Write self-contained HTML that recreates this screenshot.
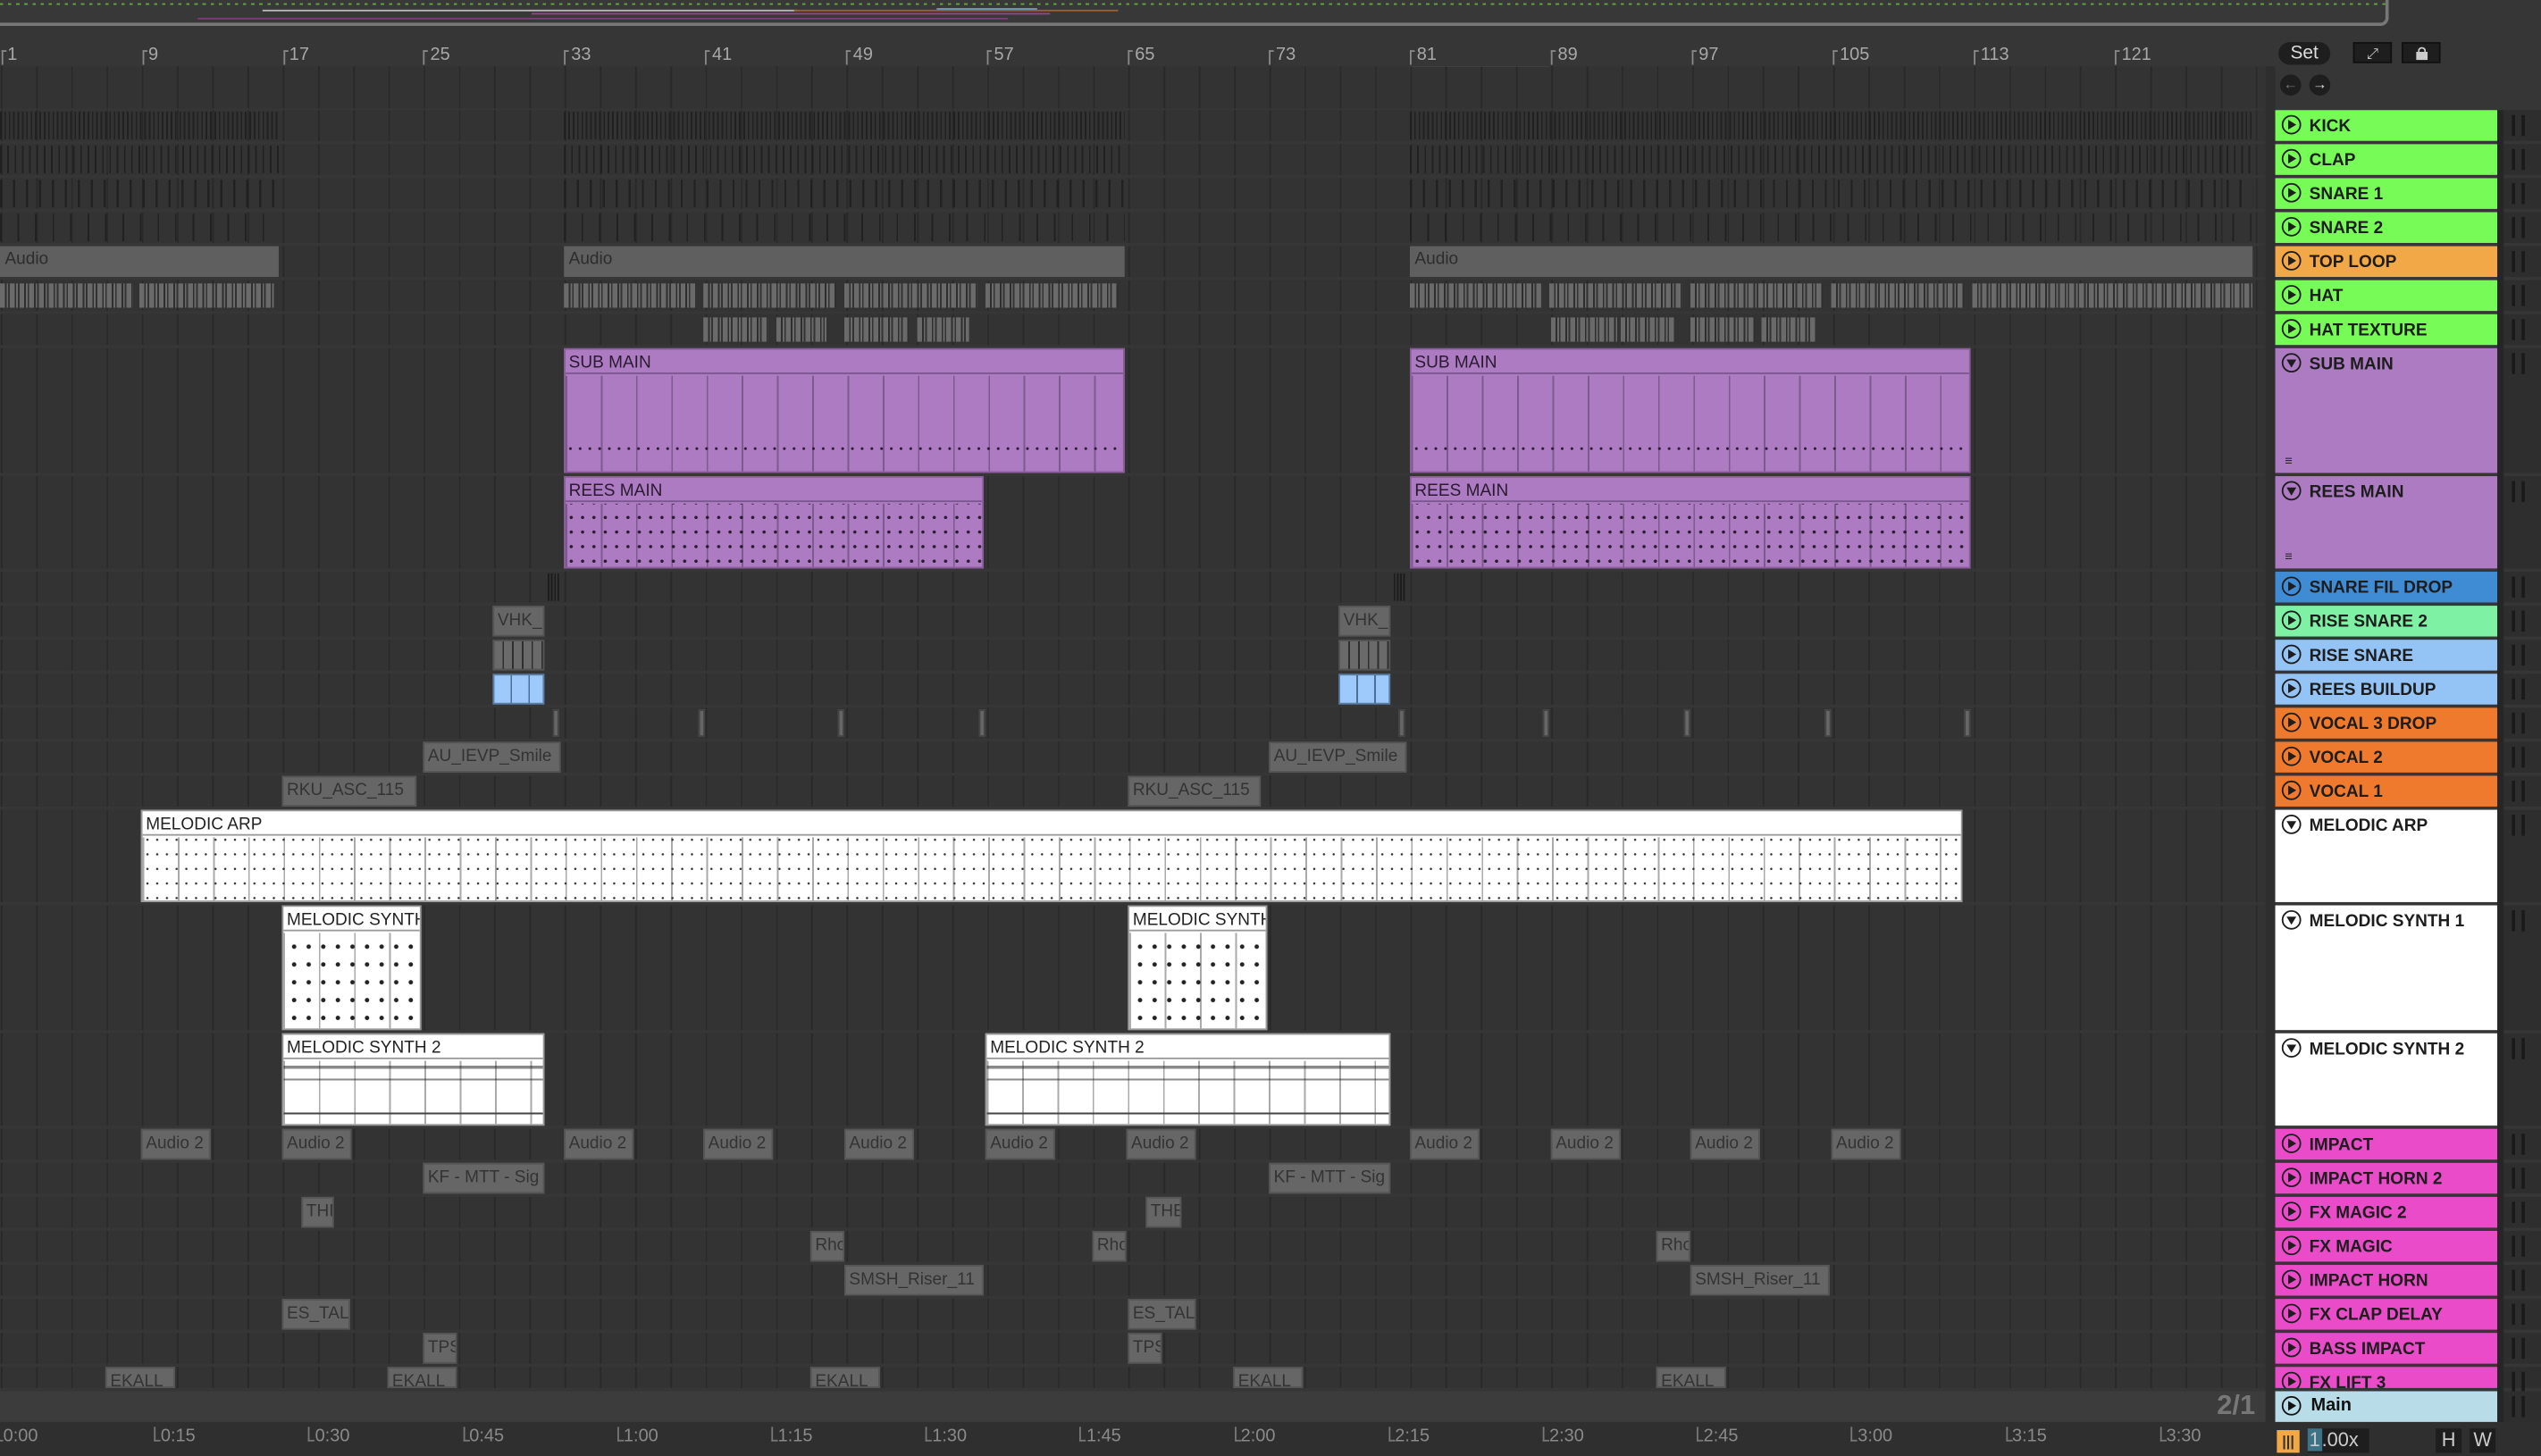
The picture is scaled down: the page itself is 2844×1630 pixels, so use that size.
<!DOCTYPE html>
<html><head><meta charset="utf-8"><style>
html,body{margin:0;padding:0;background:#2b2b2b;overflow:hidden;width:2844px;height:1630px}
#w{position:absolute;left:0;top:0;width:1568px;height:899px;transform:scale(1.81378,1.81313);transform-origin:0 0;background:#363636;font-family:"Liberation Sans",sans-serif;overflow:hidden}
.a{position:absolute}
.lane{position:absolute;left:0;width:1398px;background-color:#333;background-image:repeating-linear-gradient(90deg,#292929 0 1px,transparent 1px 21.744px);background-position:0.5px 0}
.hd{position:absolute;left:1404px;width:137px;font-weight:bold;font-size:10.5px;color:#1d1d1d;overflow:hidden;white-space:nowrap}
.hd .t{position:absolute;left:21px;top:3.5px}
.ic{position:absolute;left:4px;top:3px;width:10px;height:10px;border:1.3px solid;border-radius:50%}
.strip{position:absolute;left:1545px;width:23px;background:#2e2e2e}
.strip:after{content:"";position:absolute;left:5px;top:3px;height:13px;border-left:2px solid #1a1a1a;border-right:2px solid #1a1a1a;box-sizing:border-box;width:8px}
.clip{position:absolute;overflow:hidden;white-space:nowrap;font-size:10.5px;box-sizing:border-box}
.num{position:absolute;top:28px;color:#a8a8a8;font-size:11px}
.num:before{content:"";position:absolute;left:-4px;top:3px;width:2px;height:8px;border-left:1px solid #888;border-top:1px solid #888}
.tm{position:absolute;top:881px;color:#8a8a8a;font-size:11px}
.tm:before{content:"";position:absolute;left:-4px;top:0;width:3px;height:8px;border-left:1px solid #777;border-bottom:1px solid #777}
</style></head><body><div id="w">
<!-- overview -->
<div class="a" style="left:0;top:0;width:1472px;height:14px;background:#383838;border-bottom:2px solid #777;border-right:2px solid #777;border-radius:0 0 5px 0"></div>
<div class="a" style="left:0;top:2px;width:1472px;height:1px;background:repeating-linear-gradient(90deg,#6fc440 0 2px,#383838 2px 5px);opacity:.8"></div>
<div class="a" style="left:162px;top:6px;width:330px;height:1px;background:#bbb"></div>
<div class="a" style="left:328px;top:8px;width:320px;height:1px;background:#9a4096"></div>
<div class="a" style="left:122px;top:11px;width:500px;height:1px;background:#7e3a7a"></div>
<div class="a" style="left:490px;top:6px;width:200px;height:1px;background:#a0602e"></div>
<div class="a" style="left:578px;top:5px;width:62px;height:1px;background:#6f9fb9"></div>
<div id="ruler"></div>
<!-- loop brace -->
<div class="a" style="left:870px;top:41px;width:86px;height:9px;border:1px solid #aaa;box-sizing:border-box"></div>
<div class="a" style="left:0;top:60px;width:0;height:0;border-left:5px solid #4ab9d6;border-bottom:5px solid transparent"></div>
<!-- right top buttons -->
<div class="a" style="left:1406px;top:26px;width:32px;height:14px;border-radius:8px;background:#1e1e1e;color:#ddd;font-size:11.5px;text-align:center;line-height:14px">Set</div>
<div class="a" style="left:1452px;top:26px;width:24px;height:13px;background:#1e1e1e;border:1px solid #111;box-sizing:border-box;color:#ccc;font-size:9px;text-align:center;line-height:12px">⤢</div>
<div class="a" style="left:1482px;top:26px;width:24px;height:13px;background:#1e1e1e;border:1px solid #111;box-sizing:border-box"><div class="a" style="left:8px;top:5px;width:7px;height:5px;background:#ccc"></div><div class="a" style="left:9px;top:2px;width:3px;height:4px;border:1px solid #ccc;border-bottom:none;border-radius:3px 3px 0 0"></div></div>
<div class="a" style="left:1407px;top:46px;width:13px;height:13px;border-radius:50%;background:#1e1e1e;color:#777;font-size:9px;text-align:center;line-height:13px">←</div>
<div class="a" style="left:1425px;top:46px;width:13px;height:13px;border-radius:50%;background:#1e1e1e;color:#ddd;font-size:9px;text-align:center;line-height:13px">→</div>
<div class="a" style="left:1398px;top:41px;width:6px;height:858px;background:#2e2e2e"></div>
<div class="a" style="left:1541px;top:68px;width:4px;height:811px;background:#262626"></div>
<div class="a" style="left:0;top:41px;width:1398px;height:26px;background-color:#333;background-image:repeating-linear-gradient(90deg,#292929 0 1px,transparent 1px 21.744px);background-position:0.5px 0"></div>
<div id="rows"></div>
<div id="clips"></div>
<!-- main row -->
<div class="a" style="left:0;top:859px;width:1398px;height:19px;background:#3c3c3c"></div>
<div class="a" style="left:1368px;top:858px;color:#777;font-size:17px;font-weight:bold">2/1</div>
<div class="a" style="left:1404px;top:859px;width:137px;height:19px;background:#b8dde8;font-size:11px;font-weight:bold;color:#111"><div class="ic" style="border-color:#111;top:3px"><div class="a" style="left:3px;top:2px;border-left:5px solid #111;border-top:3.5px solid transparent;border-bottom:3.5px solid transparent"></div></div><span class="a" style="left:22px;top:3px">Main</span></div>
<div class="strip" style="top:859px;height:19px"></div>
<div class="a" style="left:0;top:878px;width:1568px;height:21px;background:#2f2f2f"></div>
<div id="times"></div>
<div class="a" style="left:1405px;top:883px;width:14px;height:14px;background:#f3a847;color:#333;font-size:9px;text-align:center;line-height:14px;font-weight:bold">|||</div>
<div class="a" style="left:1424px;top:882px;width:38px;height:15px;background:#1e1e1e;color:#ccc;font-size:12px;line-height:15px"><span style="background:#3d7386;padding:0 1px">1</span>.00x</div>
<div class="a" style="left:1503px;top:882px;width:16px;height:15px;background:#1e1e1e;color:#ccc;font-size:12px;line-height:15px;text-align:center">H</div>
<div class="a" style="left:1524px;top:882px;width:16px;height:15px;background:#1e1e1e;color:#ccc;font-size:12px;line-height:15px;text-align:center">W</div>
</div>
<script>
function bx(n){return 0.55+(n-1)*10.872}
var r=document.getElementById('ruler'),h='';
for(var n=1;n<=121;n+=8){h+='<div class="num" style="left:'+(bx(n)+4)+'px">'+n+'</div>';}
r.innerHTML=h;
var t=document.getElementById('times');h='';
var tl=['0:00','0:15','0:30','0:45','1:00','1:15','1:30','1:45','2:00','2:15','2:30','2:45','3:00','3:15','3:30'];
for(var i=0;i<tl.length;i++){h+='<div class="tm" style="left:'+(i*95.2+ (i?4:2))+'px">'+tl[i]+'</div>';}
t.innerHTML=h;
var G='#77fc57',P='#ad7bc2',O='#ef7a2e',K='#ea4cc9';
var rows=[['KICK',68,19,G,'p'],['CLAP',89,19,G,'p'],['SNARE 1',110,19,G,'p'],['SNARE 2',131,19,G,'p'],['TOP LOOP',152,19,'#f3a847','p'],['HAT',173,19,G,'p'],['HAT TEXTURE',194,19,G,'p'],['SUB MAIN',215,77,P,'d'],['REES MAIN',294,57,P,'d'],['SNARE FIL DROP',353,19,'#3f8bd4','p'],['RISE SNARE 2',374,19,'#7ef1a5','p'],['RISE SNARE',395,19,'#94c3f6','p'],['REES BUILDUP',416,19,'#94c3f6','p'],['VOCAL 3 DROP',437,19,O,'p'],['VOCAL 2',458,19,O,'p'],['VOCAL 1',479,19,O,'p'],['MELODIC ARP',500,57,'#fff','d'],['MELODIC SYNTH 1',559,77,'#fff','d'],['MELODIC SYNTH 2',638,57,'#fff','d'],['IMPACT',697,19,K,'p'],['IMPACT HORN 2',718,19,K,'p'],['FX MAGIC 2',739,19,K,'p'],['FX MAGIC',760,19,K,'p'],['IMPACT HORN',781,19,K,'p'],['FX CLAP DELAY',802,19,K,'p'],['BASS IMPACT',823,19,K,'p'],['FX LIFT 3',844,13,K,'p']];
h='';
rows.forEach(function(q){
 var tri=q[4]=='p'?'<div class="a" style="left:3px;top:1.5px;border-left:5px solid #1d1d1d;border-top:3.5px solid transparent;border-bottom:3.5px solid transparent"></div>':'<div class="a" style="left:1.5px;top:3px;border-top:5px solid #1d1d1d;border-left:3.5px solid transparent;border-right:3.5px solid transparent"></div>';
 h+='<div class="lane" style="top:'+q[1]+'px;height:'+q[2]+'px"></div>';
 h+='<div class="hd" style="top:'+q[1]+'px;height:'+q[2]+'px;background:'+q[3]+'"><div class="ic" style="border-color:#1d1d1d">'+tri+'</div><span class="t">'+q[0]+'</span>'+(q[2]>50&&q[3]==P?'<span class="a" style="left:6px;bottom:3px;font-size:8px">≡</span>':'')+'</div>';
 h+='<div class="strip" style="top:'+q[1]+'px;height:'+q[2]+'px"></div>';
});
document.getElementById('rows').innerHTML=h;
var c='';
function C(x1,x2,y,hh,st,txt){c+='<div class="clip" style="left:'+x1+'px;top:'+y+'px;width:'+(x2-x1)+'px;height:'+hh+'px;'+st+'">'+(txt||'')+'</div>';}
var drums=[[0,172],[348,694],[870,1390]];
var pats=['repeating-linear-gradient(90deg,#1c1c1c 0 1px,transparent 1px 2.7px)','repeating-linear-gradient(90deg,#1c1c1c 0 1px,transparent 1px 4.5px)','repeating-linear-gradient(90deg,#1d1d1d 0 1.3px,transparent 1.3px 8px)','repeating-linear-gradient(90deg,#1d1d1d 0 1px,transparent 1px 10.8px)'];
drums.forEach(function(d){for(var i=0;i<4;i++)C(d[0],d[1],68+i*21+1,17,'background:'+pats[i]+';opacity:.8');
 C(d[0],d[1],152,19,'background:#5f5f5f;color:#2c2c2c;padding:2px 3px;font-size:10.5px','Audio');});
var hp='background:repeating-linear-gradient(90deg,#6a6a6a 0 3px,#2e2e2e 3px 4px,#6a6a6a 4px 5px,#333 5px 6px);';
[[0,82],[86,170],[348,429],[434,516],[521,603],[608,690],[870,951],[956,1038],[1043,1125],[1130,1212],[1217,1390]].forEach(function(d){C(d[0],d[1],175,15,hp);});
[[434,474],[479,510],[521,561],[566,598],[957,998],[1000,1033],[1043,1083],[1087,1120]].forEach(function(d){C(d[0],d[1],196,15,hp);});
function mid(x1,x2,y,hh,col,txt,pat,tc){var w=col=='#fff';C(x1,x2,y,hh,'background:'+col+';border:1px solid '+(w?'#999':'#8a5c9c'));
 C(x1+1,x2-1,y+1,15,'background:'+col+';color:'+tc+';padding:2px 2px;border-bottom:1px solid '+(w?'#999':'#7b5690'),txt);
 C(x1+1,x2-1,y+17,hh-18,'background:'+pat+',repeating-linear-gradient(90deg,'+(w?'#aaa':'#7d5a8e')+' 0 1px,transparent 1px 21.744px)');}
var subp='radial-gradient(circle,#2a1a30 0 0.7px,transparent 1px) 0 36px/6px 18px repeat-x';
mid(348,694,215,77,P,'SUB MAIN',subp,'#2a1a30');
mid(870,1216,215,77,P,'SUB MAIN',subp,'#2a1a30');
var rp='radial-gradient(circle,#2a1a30 0 0.9px,transparent 1.1px) 0 4px/7px 9px';
mid(348,607,294,57,P,'REES MAIN',rp,'#2a1a30');
mid(870,1216,294,57,P,'REES MAIN',rp,'#2a1a30');
var arp='radial-gradient(circle,#333 0 0.6px,transparent 0.8px) 0 6px/6px 9px';
mid(87,1211,500,57,'#fff','MELODIC ARP',arp,'#222');
var s1='radial-gradient(circle,#222 0 1.2px,transparent 1.5px) 2px 14px/9px 11px';
mid(174,260,559,77,'#fff','MELODIC SYNTH',s1,'#222');
mid(696,782,559,77,'#fff','MELODIC SYNTH',s1,'#222');
var s2='linear-gradient(180deg,transparent 0 3px,rgba(20,20,20,.5) 3px 5px,transparent 5px 11px,rgba(20,20,20,.5) 11px 12px,transparent 12px 32px,#444 32px 33px,transparent 33px)';
mid(174,336,638,57,'#fff','MELODIC SYNTH 2',s2,'#222');
mid(608,858,638,57,'#fff','MELODIC SYNTH 2',s2,'#222');
var gs='background:#666;color:#333;padding:2px 2px;border:1px solid #555';
[[304,336],[826,858]].forEach(function(d){C(d[0],d[1],374,19,gs,'VHK_');C(d[0],d[1],395,19,'background:repeating-linear-gradient(90deg,#6a6a6a 0 5px,#2e2e2e 5px 6px);border:1px solid #555','');C(d[0],d[1],416,19,'background:repeating-linear-gradient(90deg,#9ec9fb 0 10px,#4d6f95 10px 11px);border:1px solid #5a7ea8');});
C(338,345,354,17,'background:repeating-linear-gradient(90deg,#1c1c1c 0 1px,transparent 1px 2px)');C(860,867,354,17,'background:repeating-linear-gradient(90deg,#1c1c1c 0 1px,transparent 1px 2px)');
[341,431,517,604,863,952,1039,1126,1212].forEach(function(x){C(x,x+4,438,17,'background:#666;border:1px solid #444');});
[[261,346],[783,868]].forEach(function(d){C(d[0],d[1],458,19,gs,'AU_IEVP_Smile');});
[[174,257],[696,778]].forEach(function(d){C(d[0],d[1],479,19,gs,'RKU_ASC_115');});
[87,174,348,434,521,608,695,870,957,1043,1130].forEach(function(x){C(x,x+43,697,19,gs,'Audio 2');});
[[261,336],[783,858]].forEach(function(d){C(d[0],d[1],718,19,gs,'KF - MTT - Sig');});
C(186,206,739,19,gs,'THI');C(707,729,739,19,gs,'THE');
[500,674,1022].forEach(function(x){C(x,x+21,760,19,gs,'Rho');});
C(521,607,781,19,gs,'SMSH_Riser_11');C(1043,1129,781,19,gs,'SMSH_Riser_11');
C(174,216,802,19,gs,'ES_TAL');C(696,738,802,19,gs,'ES_TAL');
C(261,282,823,19,gs,'TPS');C(696,717,823,19,gs,'TPS');
[65,239,500,761,1022].forEach(function(x){C(x,x+43,844,13,gs,'EKALL_');});
document.getElementById('clips').innerHTML=c;
</script>
</body></html>
